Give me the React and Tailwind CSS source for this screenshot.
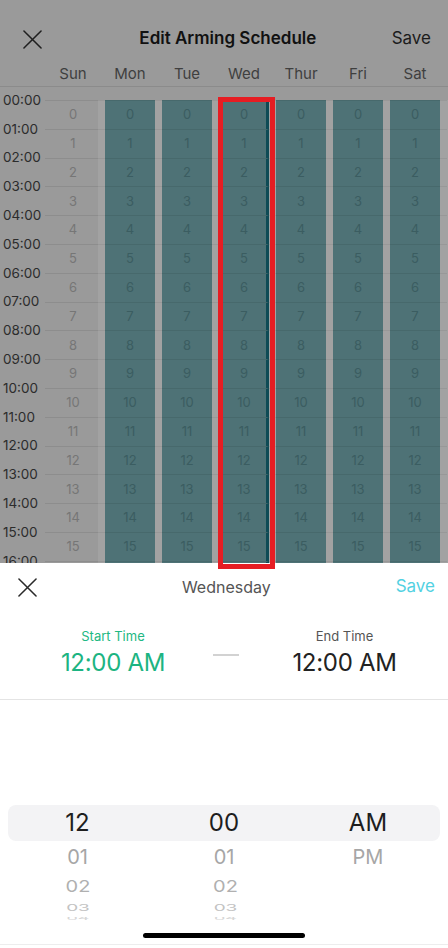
import React from "react";

const days = ["Sun", "Mon", "Tue", "Wed", "Thur", "Fri", "Sat"];
const hours = Array.from({ length: 17 }, (_, i) => i);

function XIcon({ size = 20, color = "#222" }) {
  return (
    <svg width={size} height={size} viewBox="0 0 20 20" fill="none">
      <path d="M1 1 L19 19 M19 1 L1 19" stroke={color} strokeWidth="1.6" strokeLinecap="round" />
    </svg>
  );
}

function Cell({ day, h }) {
  const label = h < 16 ? h : "";
  if (day === 0) {
    return (
      <div className="w-[50px] h-full border-t border-black/[0.08] bg-[#9a9a9a] flex items-center justify-center text-[13px] text-[#767676]">
        {label}
      </div>
    );
  }
  if (day === 3) {
    return (
      <div className="w-[50px] h-full border-t border-black/[0.08] border-r-[3px] border-r-[#0e4b55] bg-[#4e7276] flex items-center justify-center pl-[3px] text-[13px] text-[#3b5d61]">
        {label}
      </div>
    );
  }
  return (
    <div className="w-[50px] h-full border-t border-black/[0.08] bg-[#4e7276] flex items-center justify-center text-[13px] text-[#3b5d61]">
      {label}
    </div>
  );
}

export default function App() {
  return (
    <div
      className="relative w-[448px] h-[948px] overflow-hidden bg-white"
      style={{ fontFamily: "Inter, 'Noto Sans', 'Liberation Sans', sans-serif" }}
    >
      {/* Dimmed schedule page */}
      <div className="h-[563px] overflow-hidden bg-[#9a9a9a] flex flex-col">
        <div className="h-[21px] shrink-0" />
        <div className="h-[36px] shrink-0 flex items-center justify-between pl-[23px] pr-[17px]">
          <XIcon size={19} color="#1f1f1f" />
          <div className="text-[17px] font-semibold text-[#111] ml-[22px]">Edit Arming Schedule</div>
          <div className="text-[17px] text-[#1c1c1c]">Save</div>
        </div>
        <div className="h-[30px] shrink-0 pt-[5px] flex items-center pl-[48px] border-b border-[#8b8b8b]">
          {days.map((d) => (
            <div key={d} className="w-[57px] pr-[7px] text-center text-[15px] text-[#3f3f3f]">
              {d}
            </div>
          ))}
        </div>
        <div className="h-[13px] shrink-0" />
        <div className="flex shrink-0">
          <div className="w-[45px] shrink-0 flex flex-col -mt-[14.4px]">
            {hours.map((h) => (
              <div key={h} className="h-[28.8px] shrink-0 flex items-center pl-[3px] text-[13.5px] text-[#2c2c2c]">
                {String(h).padStart(2, "0")}:00
              </div>
            ))}
          </div>
          <div className="flex-1 flex flex-col bg-[#a2a2a2]">
            {hours.map((h) => (
              <div key={h} className="h-[28.8px] shrink-0 flex">
                <div className="w-[3px] h-full border-t border-black/[0.08] bg-[#9a9a9a]" />
                {days.map((d, i) => (
                  <React.Fragment key={d}>
                    <Cell day={i} h={h} />
                    <div className="w-[7px] h-full border-t border-black/[0.06]" />
                  </React.Fragment>
                ))}
              </div>
            ))}
          </div>
        </div>
      </div>

      {/* Highlight box over Wednesday */}
      <div className="absolute left-[218px] top-[97px] w-[57px] h-[472px] border-[5px] border-[#e61d23]" />

      {/* Bottom sheet */}
      <div className="flex flex-col bg-white">
        <div className="h-[48px] flex items-center justify-between pl-[18px] pr-[13px]">
          <XIcon size={19} color="#2a2a2a" />
          <div className="text-[16px] text-[#555] ml-[20px]">Wednesday</div>
          <div className="text-[17px] text-[#52d1e2]">Save</div>
        </div>
        <div className="flex items-start pt-[17px] pb-[21px] border-b border-[#e4e4e4]">
          <div className="w-[226px] flex flex-col items-center">
            <div className="h-[16px] leading-[16px] text-[13px] text-[#22b883]">Start Time</div>
            <div className="mt-[4px] h-[30px] leading-[30px] text-[24px] tracking-[-0.3px] text-[#1cb482]">12:00 AM</div>
          </div>
          <div className="w-[26px] h-[2px] bg-[#d2d2d2] mt-[26px] -ml-[13px]" />
          <div className="flex-1 flex flex-col items-center pl-[2px]">
            <div className="h-[16px] leading-[16px] text-[13px] text-[#555]">End Time</div>
            <div className="mt-[4px] h-[30px] leading-[30px] text-[24px] tracking-[-0.3px] text-[#222]">12:00 AM</div>
          </div>
        </div>

        {/* Picker */}
        <div className="h-[105px]" />
        <div className="mx-[8px] h-[36px] rounded-[8px] bg-[#f3f3f5] flex items-center text-[24px] text-[#1e1e1e]">
          <div className="w-[145px] text-center pr-[5px]">12</div>
          <div className="w-[145px] text-center">00</div>
          <div className="w-[145px] text-center">AM</div>
        </div>
        <div className="mx-[8px] h-[32px] flex items-center text-[20px] text-[#a6a6a6]">
          <div className="w-[145px] text-center pr-[5px]">01</div>
          <div className="w-[145px] text-center">01</div>
          <div className="w-[145px] text-center">PM</div>
        </div>
        <div className="mx-[8px] h-[26px] flex items-center text-[20px] text-[#b0b0b0]">
          <div className="w-[145px] text-center pr-[5px] scale-y-[0.8]">02</div>
          <div className="w-[145px] text-center scale-y-[0.8]">02</div>
        </div>
        <div className="mx-[8px] h-[18px] flex items-center text-[19px] text-[#c2c2c2] overflow-hidden">
          <div className="w-[145px] text-center pr-[5px] scale-y-[0.5]">03</div>
          <div className="w-[145px] text-center scale-y-[0.5]">03</div>
        </div>
        <div className="mx-[8px] h-[8px] flex items-start text-[18px] leading-[10px] text-[#d6d6d6] overflow-hidden">
          <div className="w-[145px] text-center pr-[5px] scale-y-[0.3] origin-top">04</div>
          <div className="w-[145px] text-center scale-y-[0.3] origin-top">04</div>
        </div>
        <div className="mt-[8px] mx-auto w-[162px] h-[5px] rounded-full bg-black" />
        <div className="mt-[6px] h-[1px] bg-[#ededed]" />
      </div>
    </div>
  );
}
